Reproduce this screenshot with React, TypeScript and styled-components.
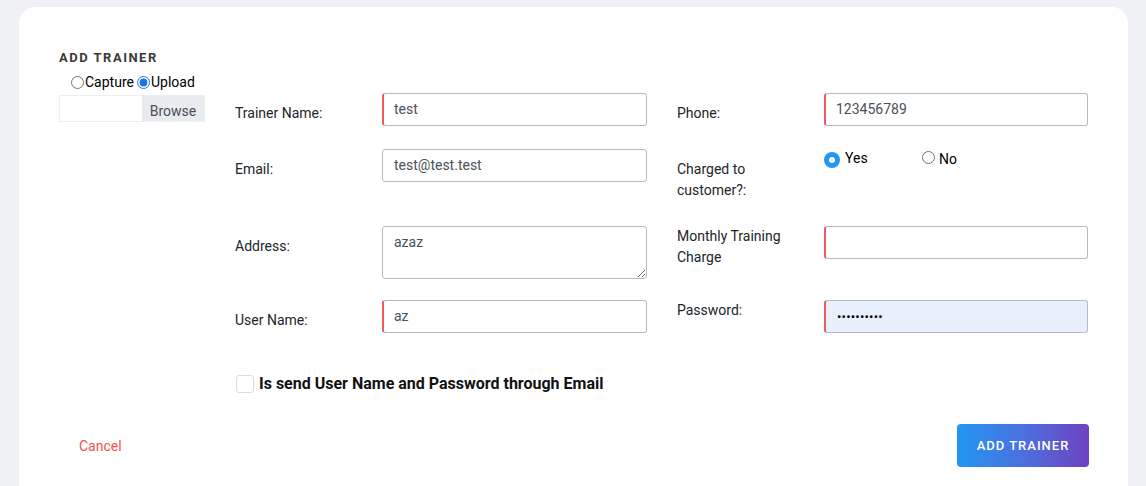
import React from "react";
import styled, { createGlobalStyle, css } from "styled-components";

const GlobalStyle = createGlobalStyle`
  html, body { margin: 0; padding: 0; background: #f0f1f5; }
  body { font-family: Roboto, "Liberation Sans", Arial, sans-serif; }
  * { box-sizing: border-box; }
`;

const Page = styled.div`
  padding: 7px 18px 0 19px;
  height: 486px;
  overflow: hidden;
`;

const Card = styled.div`
  background: #fff;
  border-radius: 16px;
  padding: 42px 40px 60px 40px;
  min-height: 520px;
`;

const Title = styled.h2`
  margin: 0 0 7px;
  font-size: 13px;
  line-height: 18px;
  font-weight: 700;
  letter-spacing: 1.5px;
  color: #3a3a3a;
`;

const Body = styled.div`
  display: flex;
  gap: 30px;
`;

const PhotoCol = styled.div`
  width: 146px;
  flex: none;
`;

const SourceRow = styled.div`
  display: flex;
  align-items: center;
  padding-left: 9px;
  font-size: 14px;
  line-height: 17px;
  color: #000;
`;

const NativeRadio = styled.input.attrs({ type: "radio" })`
  margin: 0 1px 0 3px;
  width: 13px;
  height: 13px;
  accent-color: #1a73e8;
`;

const FileBox = styled.div`
  display: flex;
  margin-top: 4px;
  height: 27px;
  border: 1px solid #eceef0;
`;

const FileInput = styled.div`
  flex: 1;
  background: #fff;
`;

const BrowseBtn = styled.div`
  width: 62px;
  background: #e9ecef;
  color: #495057;
  font-size: 14px;
  display: flex;
  align-items: center;
  justify-content: center;
  padding-top: 4px;
`;

const FormCol = styled.div`
  flex: 1;
  padding-top: 19px;
`;

const Grid = styled.div`
  display: grid;
  grid-template-columns: 412px 411px;
  column-gap: 30px;
  row-gap: 21px;
`;

const Field = styled.div`
  display: flex;
  align-items: flex-start;
`;

const Label = styled.label<{ $flush?: boolean }>`
  width: 147px;
  flex: none;
  font-size: 14px;
  line-height: 21px;
  color: #212529;
  padding-top: ${(p) => (p.$flush ? "0" : "10px")};
  padding-bottom: 4px;
  padding-right: 20px;
`;

const controlBase = css<{ $required?: boolean; $filled?: boolean }>`
  flex: 1;
  min-width: 0;
  border: 1px solid #b4bac1;
  border-left: ${(p) => (p.$required ? "2px solid #ef5b5b" : "1px solid #b4bac1")};
  border-radius: 3px;
  background: ${(p) => (p.$filled ? "#e8f0fe" : "#fff")};
  color: #495057;
  font-family: Roboto, "Liberation Sans", Arial, sans-serif;
  font-size: 14px;
  padding: 0 0 0 ${(p) => (p.$required ? "10px" : "11px")};
  outline: none;
`;

const TextInput = styled.input<{ $required?: boolean; $filled?: boolean }>`
  ${controlBase};
  height: 33px;
  padding-bottom: 2px;
`;

const PasswordInput = styled.input<{ $required?: boolean; $filled?: boolean }>`
  ${controlBase};
  height: 33px;
  color: #000;
  font-size: 13px;
  letter-spacing: 0.2px;
  padding-left: 11px;
`;

const TextArea = styled.textarea<{ $required?: boolean; $filled?: boolean }>`
  ${controlBase};
  height: 53px;
  padding-top: 6px;
  resize: vertical;
  line-height: 18px;
`;

const RadioGroup = styled.div`
  display: flex;
  align-items: center;
  padding-top: 1px;
  font-size: 14px;
  color: #000;
`;

const RadioOption = styled.label<{ $width?: number }>`
  display: flex;
  align-items: flex-start;
  width: ${(p) => (p.$width ? `${p.$width}px` : "auto")};
  line-height: 18px;
`;

const MatRadio = styled.span`
  width: 16px;
  height: 16px;
  border-radius: 50%;
  background: #2196f3;
  display: inline-flex;
  align-items: center;
  justify-content: center;
  margin-top: 1px;
  margin-right: 5px;
  &::after {
    content: "";
    width: 6px;
    height: 6px;
    border-radius: 50%;
    background: #fff;
  }
`;

const YesText = styled.span`
  margin-top: -2px;
`;

const PlainRadio = styled.span`
  width: 13px;
  height: 13px;
  border-radius: 50%;
  border: 1px solid #6f6f6f;
  margin: 1px 4px 0 0;
`;

const CheckRow = styled.label`
  display: flex;
  align-items: center;
  margin-top: 37px;
  font-size: 16px;
  font-weight: 700;
  color: #111;
  line-height: 24px;
`;

const CheckBox = styled.span`
  width: 18px;
  height: 18px;
  border: 1px solid #dcdcdc;
  border-radius: 3px;
  margin: 0 5px 0 1px;
  background: #fff;
`;

const Footer = styled.div`
  display: flex;
  justify-content: space-between;
  align-items: center;
  margin-top: 28px;
`;

const CancelLink = styled.a`
  margin-left: 20px;
  font-size: 14px;
  color: #f2534d;
  text-decoration: none;
`;

const PrimaryButton = styled.button`
  height: 43px;
  width: 132px;
  margin-right: -1px;
  border: none;
  border-radius: 4px;
  background: linear-gradient(90deg, #2196f3 0%, #4b70de 50%, #6f42c1 100%);
  color: #fff;
  font-family: Roboto, "Liberation Sans", Arial, sans-serif;
  font-size: 13px;
  font-weight: 500;
  letter-spacing: 1px;
  cursor: pointer;
`;

export default function App() {
  return (
    <>
      <GlobalStyle />
      <Page>
        <Card>
          <Title>ADD TRAINER</Title>
          <Body>
            <PhotoCol>
              <SourceRow>
                <NativeRadio name="src" />
                Capture
                <NativeRadio name="src" defaultChecked />
                Upload
              </SourceRow>
              <FileBox>
                <FileInput />
                <BrowseBtn>Browse</BrowseBtn>
              </FileBox>
            </PhotoCol>
            <FormCol>
              <Grid>
                <Field>
                  <Label>Trainer Name:</Label>
                  <TextInput $required defaultValue="test" />
                </Field>
                <Field>
                  <Label>Phone:</Label>
                  <TextInput $required defaultValue="123456789" />
                </Field>
                <Field>
                  <Label>Email:</Label>
                  <TextInput defaultValue="test@test.test" />
                </Field>
                <Field>
                  <Label>Charged to customer?:</Label>
                  <RadioGroup>
                    <RadioOption $width={98}>
                      <MatRadio />
                      <YesText>Yes</YesText>
                    </RadioOption>
                    <RadioOption>
                      <PlainRadio />
                      No
                    </RadioOption>
                  </RadioGroup>
                </Field>
                <Field>
                  <Label>Address:</Label>
                  <TextArea defaultValue="azaz" spellCheck={false} />
                </Field>
                <Field>
                  <Label $flush>Monthly Training Charge</Label>
                  <TextInput $required />
                </Field>
                <Field>
                  <Label>User Name:</Label>
                  <TextInput $required defaultValue="az" />
                </Field>
                <Field>
                  <Label $flush>Password:</Label>
                  <PasswordInput $required $filled defaultValue="••••••••••" />
                </Field>
              </Grid>
              <CheckRow>
                <CheckBox />
                Is send User Name and Password through Email
              </CheckRow>
            </FormCol>
          </Body>
          <Footer>
            <CancelLink href="#">Cancel</CancelLink>
            <PrimaryButton>ADD TRAINER</PrimaryButton>
          </Footer>
        </Card>
      </Page>
    </>
  );
}
